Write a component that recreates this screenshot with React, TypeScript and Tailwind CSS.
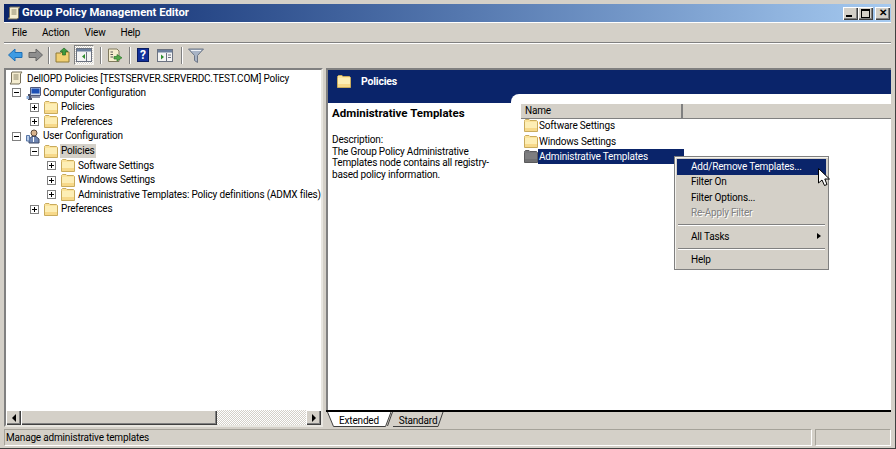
import { ReactNode } from "react";

const raised = "shadow-[inset_1px_1px_0_#fff,inset_-1px_-1px_0_#404040,inset_-2px_-2px_0_#808080]";

function Folder({ dark = false }: { dark?: boolean }) {
  return (
    <svg width="14" height="13" viewBox="0 0 14 13" className="shrink-0">
      <path d="M0.5 2.5V1.5L1.5 0.5H5L6 1.5H12.5L13.5 2.5V12.5H0.5Z" fill={dark ? "#77777a" : "#fbe39b"} stroke={dark ? "#5a5a5c" : "#c9ab5c"} />
      <rect x="1" y="3" width="12" height="9" fill={dark ? "#7e7e80" : "#fdeeb5"} />
      <rect x="1" y="9" width="12" height="3" fill={dark ? "#707072" : "#f7d98a"} />
    </svg>
  );
}

function Scroll({ size = 14 }: { size?: number }) {
  return (
    <svg width={size} height={size} viewBox="0 0 14 14" className="shrink-0">
      <path d="M3 1H13L11.5 3V12L10 13H1L2.5 11V2Z" fill="#f5edd0" stroke="#77705a" />
      <path d="M4.5 4H9.5M4.5 6H9.5M4.5 8H9.5" stroke="#8a8468" />
    </svg>
  );
}

function Computer() {
  return (
    <svg width="15" height="14" viewBox="0 0 15 14" className="shrink-0">
      <rect x="2" y="8" width="4" height="6" fill="#4a4f66" />
      <rect x="0.5" y="10" width="2.5" height="3" fill="#8fb0dc" />
      <path d="M4.5 1.5H14.5V9.5H4.5Z" fill="#c9d6ea" stroke="#50587a" />
      <rect x="5.5" y="2.5" width="8" height="5" fill="#1d4fb5" />
      <path d="M5 10H14V12H5Z" fill="#8e93a8" />
    </svg>
  );
}

function User() {
  return (
    <svg width="15" height="15" viewBox="0 0 15 15" className="shrink-0">
      <circle cx="8" cy="4" r="3" fill="#d9b38c" stroke="#5b4a3c" />
      <path d="M3 14V10L6 7.5H10L13 10V14Z" fill="#6f86b3" stroke="#3e4a68" />
      <path d="M0.5 6.5H3.5V12H0.5Z" fill="#b9cdea" stroke="#5876a6" />
      <path d="M7.5 8V13" stroke="#fff" />
    </svg>
  );
}

function Expander({ open = false }: { open?: boolean }) {
  return (
    <span className="relative w-[9px] h-[9px] shrink-0 border border-[#808080] bg-white mr-[5px]">
      <span className="absolute left-[1px] top-[3px] w-[5px] h-px bg-black" />
      {!open && <span className="absolute left-[3px] top-[1px] w-px h-[5px] bg-black" />}
    </span>
  );
}

function TreeRow({
  pad,
  icon,
  open,
  selected,
  children,
}: {
  pad: string;
  icon: ReactNode;
  open?: boolean;
  selected?: boolean;
  children: ReactNode;
}) {
  return (
    <div className={`flex items-center h-[14.55px] ${pad}`}>
      <Expander open={open} />
      <span className="w-[14px] flex justify-center shrink-0 mr-[2px]">{icon}</span>
      <span className={`px-px whitespace-nowrap leading-[14px] ${selected ? "bg-[#d4d0c8]" : ""}`}>{children}</span>
    </div>
  );
}

function MenuItem({ children, active, disabled }: { children: ReactNode; active?: boolean; disabled?: boolean }) {
  return (
    <div
      className={`h-[15.5px] flex items-center pl-[14px] whitespace-nowrap ${
        active ? "bg-[#0a246a] text-white" : disabled ? "pb-px text-[#808080] [text-shadow:1px_1px_0_#fff]" : "pb-px text-black"
      }`}
    >
      {children}
    </div>
  );
}

function Separator() {
  return <div className="my-[3px] mx-px h-[2px] border-t border-[#808080] border-b-white border-b" />;
}

function ToolSep() {
  return <div className="w-[2px] h-[17px] border-l border-[#808080] border-r-white border-r mx-[3px]" />;
}

function ListRow({ dark, children }: { dark?: boolean; children: ReactNode }) {
  return (
    <div className="flex items-center h-[15.4px] pl-[3px]">
      <Folder dark={dark} />
      <span className={`h-[15.4px] flex items-center pl-[1px] whitespace-nowrap ${dark ? "bg-[#0a246a] text-white w-[146px]" : ""}`}>
        {children}
      </span>
    </div>
  );
}

function WinButton({ children }: { children: ReactNode }) {
  return <div className={`w-[15px] h-[13px] bg-[#d4d0c8] flex items-center justify-center ${raised}`}>{children}</div>;
}

export default function App() {
  return (
    <div className="w-[896px] h-[449px] bg-[#d4d0c8] overflow-hidden relative flex flex-col text-[10px] tracking-[-0.18px] text-black px-[4px] pt-[4px] pb-[2px] border-b border-r border-[#404040] font-['Roboto',sans-serif]">
      {/* title bar */}
      <div className="h-[18px] shrink-0 flex items-center pl-[3px] pr-[1px] bg-gradient-to-r from-[#0a246a] to-[#a6caf0]">
        <Scroll />
        <span className="ml-px text-white font-bold text-[11.3px] tracking-normal">Group Policy Management Editor</span>
        <div className="ml-auto flex">
          <WinButton>
            <span className="w-[6px] h-[2px] mt-[6px] mr-[3px] bg-black" />
          </WinButton>
          <WinButton>
            <span className="w-[9px] h-[9px] border border-black border-t-2" />
          </WinButton>
          <div className="ml-[2px]">
            <WinButton>
              <span className="text-[10px] leading-none font-bold">✕</span>
            </WinButton>
          </div>
        </div>
      </div>

      {/* menu */}
      <div className="h-[21px] shrink-0 flex items-center border-t border-white border-b-[#808080] border-b gap-[15px] pl-[8px]">
        <span>File</span>
        <span>Action</span>
        <span>View</span>
        <span>Help</span>
      </div>

      {/* toolbar */}
      <div className="h-[23px] shrink-0 flex items-center border-t border-white pl-[4px]">
        <svg width="15" height="14" viewBox="0 0 15 14">
          <path d="M7 1V4.5H14V9.5H7V13L0.5 7Z" fill="#3d9be3" stroke="#1f6fb5" />
        </svg>
        <svg width="15" height="14" viewBox="0 0 15 14" className="ml-[5px]">
          <path d="M8 1V4.5H1V9.5H8V13L14.5 7Z" fill="#8e8e8e" stroke="#666" />
        </svg>
        <span className="ml-[2px]"><ToolSep /></span>
        <svg width="16" height="16" viewBox="0 0 16 16" className="ml-[2px]">
          <path d="M1 6H6L7 5H14V15H1Z" fill="#f1cf72" stroke="#8f7a36" />
          <path d="M9 1L13 4.5H10.5V8H7.5V4.5H5Z" fill="#3f9a3f" stroke="#246a24" strokeWidth="0.7" />
        </svg>
        <div className="ml-[3px] w-[20px] h-[20px] flex items-center justify-center border border-[#f4f3ef] border-t-[#808080] border-l-[#808080] bg-[repeating-conic-gradient(#d4d0c8_0_25%,#fff_0_50%)] bg-[length:2px_2px]">
          <svg width="16" height="14" viewBox="0 0 16 14">
            <rect x="0.5" y="0.5" width="15" height="13" fill="#f4f4f4" stroke="#6b7280" />
            <rect x="1" y="1" width="14" height="2.5" fill="#6b7f9c" />
            <path d="M9 6V11L6 8.5Z" fill="#2f8f2f" />
            <path d="M10.5 4V13" stroke="#6b7280" />
          </svg>
        </div>
        <span className="ml-[3px]"><ToolSep /></span>
        <svg width="16" height="15" viewBox="0 0 16 15" className="ml-[2px]">
          <path d="M1.5 1H10L12 3V13.5H1.5Z" fill="#f6efcf" stroke="#807a5e" />
          <path d="M3.5 4H6M3.5 6.5H6M3.5 9H6" stroke="#555" />
          <path d="M10 6.5V8.5H7V11H10V13L15 9.8Z" fill="#52a84a" stroke="#2e7a2e" strokeWidth="0.7" />
        </svg>
        <span className="ml-[3px]"><ToolSep /></span>
        <div className="ml-[3px] w-[12px] h-[14px] bg-[#12309a] border border-[#0a1c5f] text-white font-bold text-[12px] leading-[12px] text-center">?</div>
        <svg width="16" height="13" viewBox="0 0 16 13" className="ml-[8px]">
          <rect x="0.5" y="0.5" width="15" height="12" fill="#f4f4f4" stroke="#6b7280" />
          <rect x="1" y="1" width="14" height="2.5" fill="#6b7f9c" />
          <path d="M4 5.5V10.5L7 8Z" fill="#2f8f2f" />
          <path d="M9.5 4V12" stroke="#6b7280" />
          <path d="M11 6H14M11 8.5H14" stroke="#6b7280" />
        </svg>
        <span className="ml-[5px]"><ToolSep /></span>
        <svg width="16" height="15" viewBox="0 0 16 15" className="ml-[2px]">
          <path d="M0.5 1H15.5L9.5 7.5V14.5L6.5 12.5V7.5Z" fill="#a8b4c6" stroke="#6c7686" />
          <path d="M3 2.5H13" stroke="#eef2f7" />
        </svg>
      </div>

      {/* main */}
      <div className="flex-1 min-h-0 flex mt-[2px]">
        {/* tree pane */}
        <div className="w-[319px] shrink-0 flex flex-col border-2 border-[#808080] border-r-[#e8e6e0] border-b-[#e8e6e0] bg-white">
          <div className="flex-1 min-h-0 pt-[1px]">
            <div className="flex items-center h-[14.55px] pl-[3px]">
              <Scroll />
              <span className="ml-[4px] whitespace-nowrap">DellOPD Policies [TESTSERVER.SERVERDC.TEST.COM] Policy</span>
            </div>
            <TreeRow pad="pl-[6px]" open icon={<Computer />}>Computer Configuration</TreeRow>
            <TreeRow pad="pl-[24px]" icon={<Folder />}>Policies</TreeRow>
            <TreeRow pad="pl-[24px]" icon={<Folder />}>Preferences</TreeRow>
            <TreeRow pad="pl-[6px]" open icon={<User />}>User Configuration</TreeRow>
            <TreeRow pad="pl-[24px]" open selected icon={<Folder />}>Policies</TreeRow>
            <TreeRow pad="pl-[41px]" icon={<Folder />}>Software Settings</TreeRow>
            <TreeRow pad="pl-[41px]" icon={<Folder />}>Windows Settings</TreeRow>
            <TreeRow pad="pl-[41px]" icon={<Folder />}>Administrative Templates: Policy definitions (ADMX files)</TreeRow>
            <TreeRow pad="pl-[24px]" icon={<Folder />}>Preferences</TreeRow>
          </div>
          {/* scrollbar */}
          <div className="h-[15px] shrink-0 flex bg-[repeating-conic-gradient(#d4d0c8_0_25%,#fff_0_50%)] bg-[length:2px_2px]">
            <div className={`w-[15px] bg-[#d4d0c8] flex items-center justify-center ${raised}`}>
              <span className="border-y-[4px] border-y-transparent border-r-[4px] border-r-black" />
            </div>
            <div className={`w-[196px] bg-[#d4d0c8] ${raised}`} />
            <div className={`w-[15px] ml-auto bg-[#d4d0c8] flex items-center justify-center ${raised}`}>
              <span className="border-y-[4px] border-y-transparent border-l-[4px] border-l-black" />
            </div>
          </div>
        </div>

        {/* details pane */}
        <div className="w-[565px] ml-[3px] shrink-0 flex flex-col">
          <div className="flex-1 min-h-0 flex flex-col border-t-2 border-l-2 border-[#808080] bg-[#0a246a]">
            <div className="h-[24px] shrink-0 flex items-center pl-[9px] pb-[1px] text-white font-bold text-[10.5px]">
              <Folder />
              <span className="ml-[10px]">Policies</span>
            </div>
            <div className="flex-1 min-h-0 flex">
              <div className="w-[183px] shrink-0 mt-[9px] bg-white pl-[4px] pt-[2px]">
                <div className="font-bold text-[11.5px] tracking-normal leading-[16px]">Administrative Templates</div>
                <div className="mt-[13px] leading-[11.7px] w-[158px]">
                  <div>Description:</div>
                  <div>The Group Policy Administrative Templates node contains all registry-based policy information.</div>
                </div>
              </div>
              <div className="flex-1 rounded-tl-[8px] bg-white pl-[10px] pt-[10px]">
                <div className="h-[15px] flex bg-[#d4d0c8] border-b border-[#808080]">
                  <div className="w-[162px] pl-[4px] border-r-2 border-[#808080] leading-[14px]">Name</div>
                </div>
                <div className="-mt-px">
                  <ListRow>Software Settings</ListRow>
                  <ListRow>Windows Settings</ListRow>
                  <ListRow dark>Administrative Templates</ListRow>
                </div>
              </div>
            </div>
          </div>
          {/* tabs */}
          <div className="h-[17px] shrink-0 flex items-start border-t-2 border-black bg-[#d4d0c8] pl-[1px] relative">
            <div className="relative w-[64px] h-[15px] flex items-center justify-center pt-px">
              <svg width="64" height="15" viewBox="0 0 64 15" className="absolute inset-0">
                <path d="M0.5 0L6.5 14.5H58.5L64 0" fill="#fff" stroke="#404040" />
              </svg>
              <span className="relative">Extended</span>
            </div>
            <div className="relative -ml-[4px] w-[62px] h-[15px] flex items-center justify-center pt-px">
              <svg width="62" height="15" viewBox="0 0 62 15" className="absolute inset-0">
                <path d="M0.5 14L5.5 0M56 0L51 14.5H6" fill="none" stroke="#404040" />
              </svg>
              <span className="relative">Standard</span>
            </div>
          </div>
        </div>
      </div>

      {/* status bar */}
      <div className="h-[17px] shrink-0 flex gap-[3px] mt-[2px]">
        <div className="flex-1 pl-[1px] leading-[16px] border border-[#a5a299] border-r-white border-b-white">Manage administrative templates</div>
        <div className="w-[76px] border border-[#a5a299] border-r-white border-b-white" />
      </div>

      {/* context menu */}
      <div className="absolute left-[674px] top-[156px] w-[155px] h-[114px] bg-[#d4d0c8] border border-[#808080] shadow-[inset_1px_1px_0_#f4f3ef] p-[2px]">
        <MenuItem active>Add/Remove Templates...</MenuItem>
        <MenuItem>Filter On</MenuItem>
        <MenuItem>Filter Options...</MenuItem>
        <MenuItem disabled>Re-Apply Filter</MenuItem>
        <Separator />
        <div className="relative">
          <MenuItem>All Tasks</MenuItem>
          <span className="absolute right-[5px] top-[4px] border-y-[3.5px] border-y-transparent border-l-[4px] border-l-black" />
        </div>
        <Separator />
        <MenuItem>Help</MenuItem>
      </div>

      {/* mouse cursor */}
      <svg width="13" height="19" viewBox="0 0 13 19" className="absolute left-[818px] top-[168px]">
        <path d="M0.5 0.5V15L4 12L6.5 17.5L9 16.5L6.8 11H11.5Z" fill="#fff" stroke="#000" />
      </svg>
    </div>
  );
}
